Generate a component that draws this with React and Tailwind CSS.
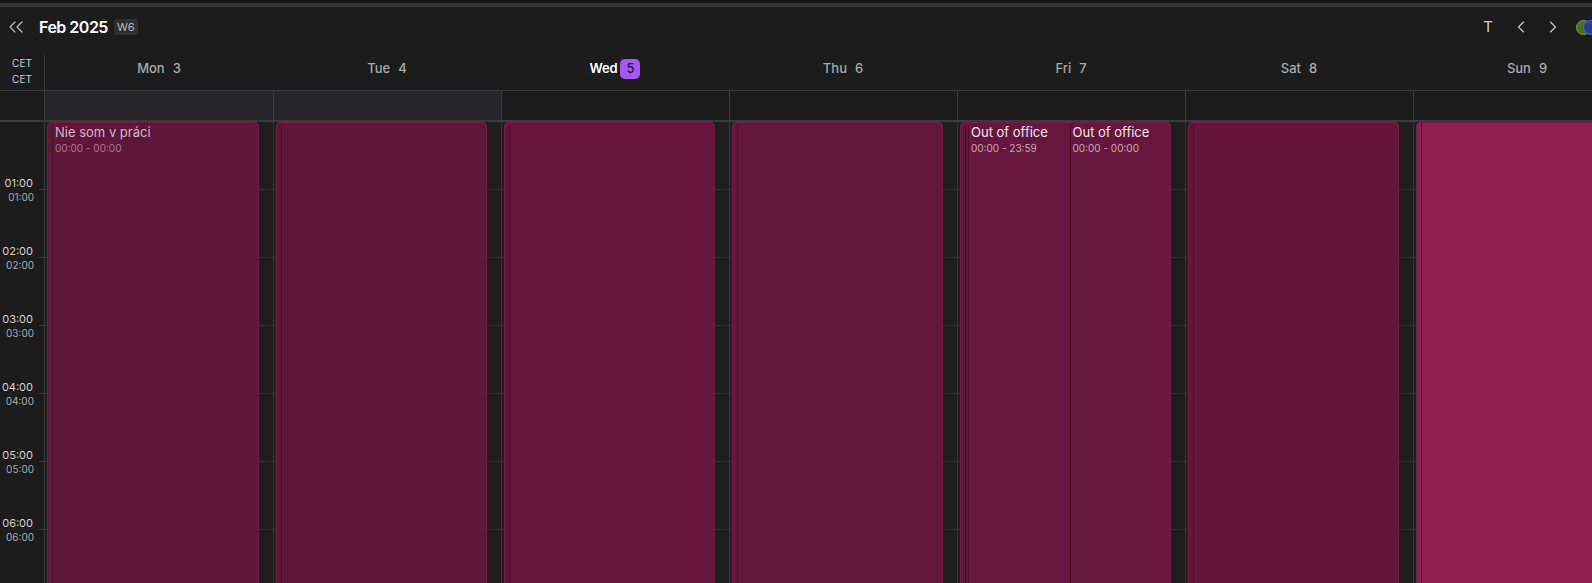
import React from 'react';
import { ChevronLeft, ChevronRight, ChevronsLeft } from 'lucide-react';

// week header data
const days = [
    { name: 'Mon', num: 3 },
    { name: 'Tue', num: 4 },
    { name: 'Wed', num: 5, today: true },
    { name: 'Thu', num: 6 },
    { name: 'Fri', num: 7 },
    { name: 'Sat', num: 8 },
    { name: 'Sun', num: 9 },
];

const hours = ['01:00', '02:00', '03:00', '04:00', '05:00', '06:00', '07:00'];

// one full-height block per day column
const EventBlock = ({ color, children }) => (
    <div className={`absolute top-0 bottom-[-40px] left-[2px] right-[14px] rounded-t-[4px] border border-[#731c46] ${color} flex`}>
        <div className="ml-[4px] flex-1 flex border-l border-[#4c0f2b] min-w-0">{children}</div>
    </div>
);

const EventLabel = ({ title, time, muted = false }) => (
    <div className="pl-[2px] pt-[1px]">
        <div className={`text-[13px] leading-[16px] whitespace-nowrap ${muted ? 'text-[#d2b4c4]' : 'text-[#f3e6ed]'}`}>{title}</div>
        <div className={`text-[10px] leading-[12px] mt-[2px] whitespace-nowrap ${muted ? 'text-[#a47c92]' : 'text-[#c7a6b7]'}`}>{time}</div>
    </div>
);

const App = () => {
    return (
        <div className="w-full h-[583px] overflow-hidden bg-[#1c1c1c] font-['Inter','Noto_Sans',sans-serif]">
            <div className="w-[1641px]">
                {/* top strip */}
                <div className="h-[3px] bg-[#171717]" />
                <div className="h-[4px] bg-[#313131]" />

                {/* title bar */}
                <div className="h-[40px] flex items-center">
                    <div className="flex-1 flex items-center">
                        <ChevronsLeft size={24} strokeWidth={1.2} className="ml-[4px] text-[#bdbdbd]" />
                        <span className="ml-[11px] text-[16px] font-semibold text-white tracking-[-0.5px]">Feb 2025</span>
                        <span className="ml-[6px] px-[3px] h-[16px] leading-[16px] rounded-[3px] bg-[#2f2f2f] text-[11px] text-[#b8b8b8]">W6</span>
                    </div>
                    <div className="w-[159px] flex items-center">
                        <span className="w-[12px] text-center text-[15px] text-[#cfcfcf]">T</span>
                        <ChevronLeft size={20} strokeWidth={1.4} className="ml-[17px] text-[#c4c4c4]" />
                        <ChevronRight size={20} strokeWidth={1.4} className="ml-[12px] text-[#c4c4c4]" />
                        <div className="ml-[13px] flex">
                            <span className="w-[15px] h-[15px] rounded-full bg-[#4b6d1b] border border-[#7aa33a]" />
                            <span className="-ml-[8px] w-[15px] h-[15px] rounded-full bg-[#2b3b9c] border border-[#4f63c9]" />
                        </div>
                    </div>
                </div>

                {/* day header */}
                <div className="grid grid-cols-[45px_repeat(7,228px)] h-[43px]">
                    <div className="mt-[8px] border-r border-[#3a3a3a] flex flex-col items-center text-[10px] leading-[16px] text-[#cccccc]">
                        <span>CET</span>
                        <span>CET</span>
                    </div>
                    {days.map(d => (
                        <div key={d.name} className="flex items-center justify-center pt-[1px]">
                            {d.today ? (
                                <div className="flex items-center gap-[3px]">
                                    <span className="text-[13px] font-semibold text-white tracking-[-0.2px]">{d.name}</span>
                                    <span className="w-[20px] h-[20px] rounded-[5px] bg-[#a855f7] text-[#2e0a52] text-[13px] font-medium flex items-center justify-center">{d.num}</span>
                                </div>
                            ) : (
                                <div className="flex items-center gap-[8px] text-[13px] font-medium text-[#a8a8a8]">
                                    <span>{d.name}</span>
                                    <span>{d.num}</span>
                                </div>
                            )}
                        </div>
                    ))}
                </div>

                {/* all-day row */}
                <div className="grid grid-cols-[45px_repeat(7,228px)] h-[32px] border-t border-b-2 border-[#3a3a3a]">
                    <div className="border-r border-[#3a3a3a]" />
                    {days.map((d, i) => (
                        <div key={d.name} className={`${i > 0 ? 'border-l border-[#3a3a3a]' : ''} ${i < 2 ? 'bg-[#25252a]' : ''}`} />
                    ))}
                </div>

                {/* time grid */}
                <div className="grid grid-cols-[45px_repeat(7,228px)] h-[461px] overflow-hidden">
                    <div className="border-r border-[#3a3a3a]">
                        {hours.map((h, i) => (
                            <div key={h} className="h-[68px] flex flex-col justify-between relative after:absolute after:right-0 after:bottom-0 after:w-[5px] after:h-px after:bg-[#3a3a3a]">
                                <div className="text-[10px] leading-[12px] mt-px pr-[10px] text-right text-[#a9a9a9]">{i > 0 ? hours[i - 1] : ''}</div>
                                <div className="text-[11px] leading-[13px] pr-[11px] text-right text-[#cfcfcf]">{i < 6 ? h : ''}</div>
                            </div>
                        ))}
                    </div>

                    {days.map((d, i) => (
                        <div key={d.name} className={`relative bg-[#1e1e1e] ${i > 0 ? 'border-l border-[#343434]' : ''}`}>
                            {hours.map(h => (
                                <div key={h} className="h-[68px] border-b border-[#303030]" />
                            ))}
                            {i === 0 && (
                                <EventBlock color="bg-[#5e1739]">
                                    <EventLabel title="Nie som v práci" time="00:00 - 00:00" muted />
                                </EventBlock>
                            )}
                            {i === 1 && <EventBlock color="bg-[#5d1538]" />}
                            {i === 2 && <EventBlock color="bg-[#65153c]" />}
                            {i === 3 && <EventBlock color="bg-[#63153b]" />}
                            {i === 4 && (
                                <EventBlock color="bg-[#621538]">
                                    <div className="flex-1 flex pl-[2px] gap-px">
                                        <div className="flex-1 rounded-t-[4px] bg-[#67163d] border-l border-[#4c0f2b]">
                                            <EventLabel title="Out of office" time="00:00 - 23:59" />
                                        </div>
                                        <div className="flex-1 rounded-t-[4px] bg-[#67163d] border-l border-[#3c0c22]">
                                            <EventLabel title="Out of office" time="00:00 - 00:00" />
                                        </div>
                                    </div>
                                </EventBlock>
                            )}
                            {i === 5 && <EventBlock color="bg-[#641339]" />}
                            {i === 6 && <EventBlock color="bg-[#8e1f50]" />}
                        </div>
                    ))}
                </div>
            </div>
        </div>
    );
};

export default App;
